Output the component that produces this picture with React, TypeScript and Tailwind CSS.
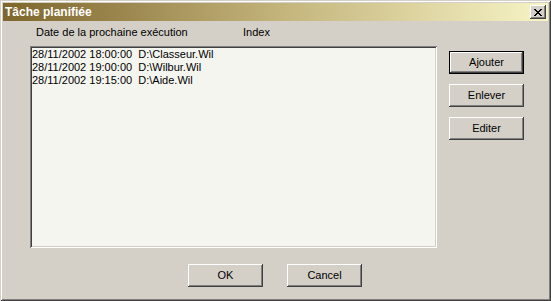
import React from 'react';

const ROWS = [
  { date: '28/11/2002 18:00:00', file: 'D:\\Classeur.Wil' },
  { date: '28/11/2002 19:00:00', file: 'D:\\Wilbur.Wil' },
  { date: '28/11/2002 19:15:00', file: 'D:\\Aide.Wil' },
];

const raised =
  'bg-[#d4d0c8] shadow-[inset_-1px_-1px_0_#404040,inset_1px_1px_0_#ffffff,inset_-2px_-2px_0_#808080]';

const Button: React.FC<{ label: string; isDefault?: boolean }> = ({ label, isDefault }) => (
  <div
    className={
      isDefault
        ? 'w-[75px] h-[23px] border border-black bg-[#d4d0c8]'
        : 'w-[75px] h-[23px]'
    }
  >
    <div
      className={`${raised} h-full w-full flex items-center justify-center text-[11px] text-black leading-none`}
    >
      {label}
    </div>
  </div>
);

const App: React.FC = () => {
  return (
    <div
      className="w-[551px] h-[301px] bg-[#d4d0c8] p-[3px] flex flex-col shadow-[inset_1px_1px_0_#d4d0c8,inset_-1px_-1px_0_#404040,inset_2px_2px_0_#ffffff,inset_-2px_-2px_0_#808080]"
      style={{ fontFamily: '"Liberation Sans", Arial, sans-serif' }}
    >
      {/* Title bar */}
      <div className="h-[18px] flex items-center justify-between bg-gradient-to-r from-[#7e662c] via-[#c2b37a] to-[#f7f4c6] pl-[2px] pr-[2px]">
        <span className="text-white font-bold text-[12px] leading-none">
          Tâche planifiée
        </span>
        <div className={`${raised} w-[16px] h-[14px] flex items-center justify-center`}>
          <svg width="8" height="7" viewBox="0 0 8 7" shapeRendering="crispEdges">
            <path d="M0 0h2v1H0zM6 0h2v1H6zM1 1h2v1H1zM5 1h2v1H5zM2 2h4v1H2zM3 3h2v1H3zM2 4h4v1H2zM1 5h2v1H1zM5 5h2v1H5zM0 6h2v1H0zM6 6h2v1H6z" fill="#000" />
          </svg>
        </div>
      </div>

      {/* Column headers */}
      <div className="mt-[5px] h-[13px] flex text-[11px] leading-[13px] text-black">
        <span className="ml-[33px] w-[207px]">Date de la prochaine exécution</span>
        <span>Index</span>
      </div>

      {/* List + side buttons */}
      <div className="mt-[7px] flex">
        <div className="ml-[27px] w-[407px] h-[202px] bg-[#f5f5f0] p-[2px] shadow-[inset_1px_1px_0_#808080,inset_-1px_-1px_0_#ffffff,inset_2px_2px_0_#404040,inset_-2px_-2px_0_#d4d0c8]">
          {ROWS.map((r) => (
            <div key={r.date} className="h-[13px] text-[11px] leading-[13px] text-black whitespace-pre">
              {r.date}  {r.file}
            </div>
          ))}
        </div>
        <div className="ml-[12px] mt-[5px] flex flex-col gap-[10px]">
          <Button label="Ajouter" isDefault />
          <Button label="Enlever" />
          <Button label="Editer" />
        </div>
      </div>

      {/* Bottom buttons */}
      <div className="mt-[16px] flex justify-center gap-[24px] pr-[1px]">
        <Button label="OK" />
        <Button label="Cancel" />
      </div>
    </div>
  );
};

export default App;
